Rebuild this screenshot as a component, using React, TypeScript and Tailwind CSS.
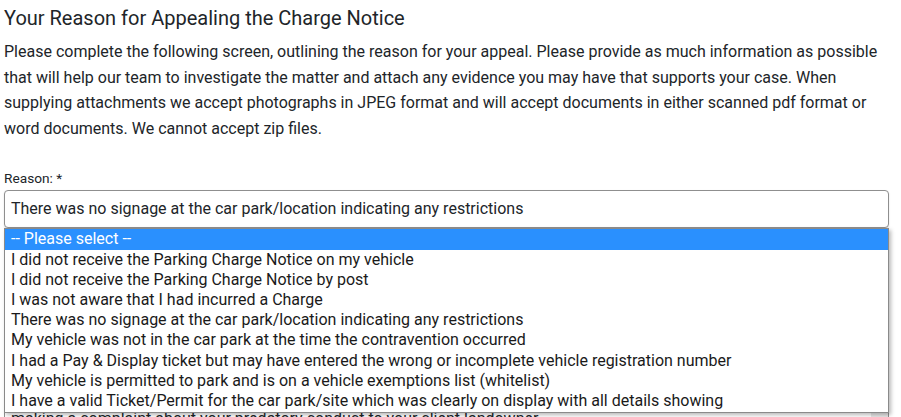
import React from "react";

const options = [
  "-- Please select --",
  "I did not receive the Parking Charge Notice on my vehicle",
  "I did not receive the Parking Charge Notice by post",
  "I was not aware that I had incurred a Charge",
  "There was no signage at the car park/location indicating any restrictions",
  "My vehicle was not in the car park at the time the contravention occurred",
  "I had a Pay & Display ticket but may have entered the wrong or incomplete vehicle registration number",
  "My vehicle is permitted to park and is on a vehicle exemptions list (whitelist)",
  "I have a valid Ticket/Permit for the car park/site which was clearly on display with all details showing",
];

export default function App() {
  return (
    <div
      className="h-[417px] w-[901px] overflow-hidden bg-white text-[#212529]"
      style={{ fontFamily: "Roboto, 'Liberation Sans', sans-serif" }}
    >
      <div className="w-[889px] pl-[4px] pt-[6px]">
        <h2 className="text-[20px] leading-[24px] font-normal">
          Your Reason for Appealing the Charge Notice
        </h2>
        <p className="mt-[9px] text-[16px] leading-[25.6px]">
          Please complete the following screen, outlining the reason for your appeal. Please provide as much
          information as possible that will help our team to investigate the matter and attach any evidence you
          may have that supports your case. When supplying attachments we accept photographs in JPEG format and
          will accept documents in either scanned pdf format or word documents. We cannot accept zip files.
        </p>
        <label className="mt-[29px] block text-[13.7px] leading-[16px]">Reason: *</label>
        <div className="relative mt-[4px]">
          <div className="flex h-[38px] items-center rounded-[4px] border border-[#8f8f8f] bg-white px-[6px] text-[16px] shadow-[0_1px_2px_rgba(0,0,0,0.12)]">
            There was no signage at the car park/location indicating any restrictions
          </div>
          <div className="absolute left-0 right-0 top-[38px] z-10 border border-[#8a8a8a] bg-white pb-[1px] shadow-[2px_2px_4px_rgba(0,0,0,0.28)]">
            {options.map((o, i) => (
              <div
                key={i}
                className={
                  i === 0
                    ? "h-[20.2px] whitespace-nowrap bg-[#2a90fe] pl-[6px] text-[16px] leading-[20.2px] text-white"
                    : "h-[20.2px] whitespace-nowrap pl-[6px] text-[16px] leading-[20.2px] text-[#1a1a1a]"
                }
              >
                {o}
              </div>
            ))}
          </div>
          <div className="mt-[167px] flex h-[60px] rounded-[4px] border border-[#8f8f8f] bg-white">
            <div className="flex-1 px-[6px] pt-[10px] text-[16px] leading-[25.6px]">
              making a complaint about your predatory conduct to your client landowner
            </div>
            <div className="w-[17px] bg-[#e8e8e8]" />
          </div>
        </div>
      </div>
    </div>
  );
}
